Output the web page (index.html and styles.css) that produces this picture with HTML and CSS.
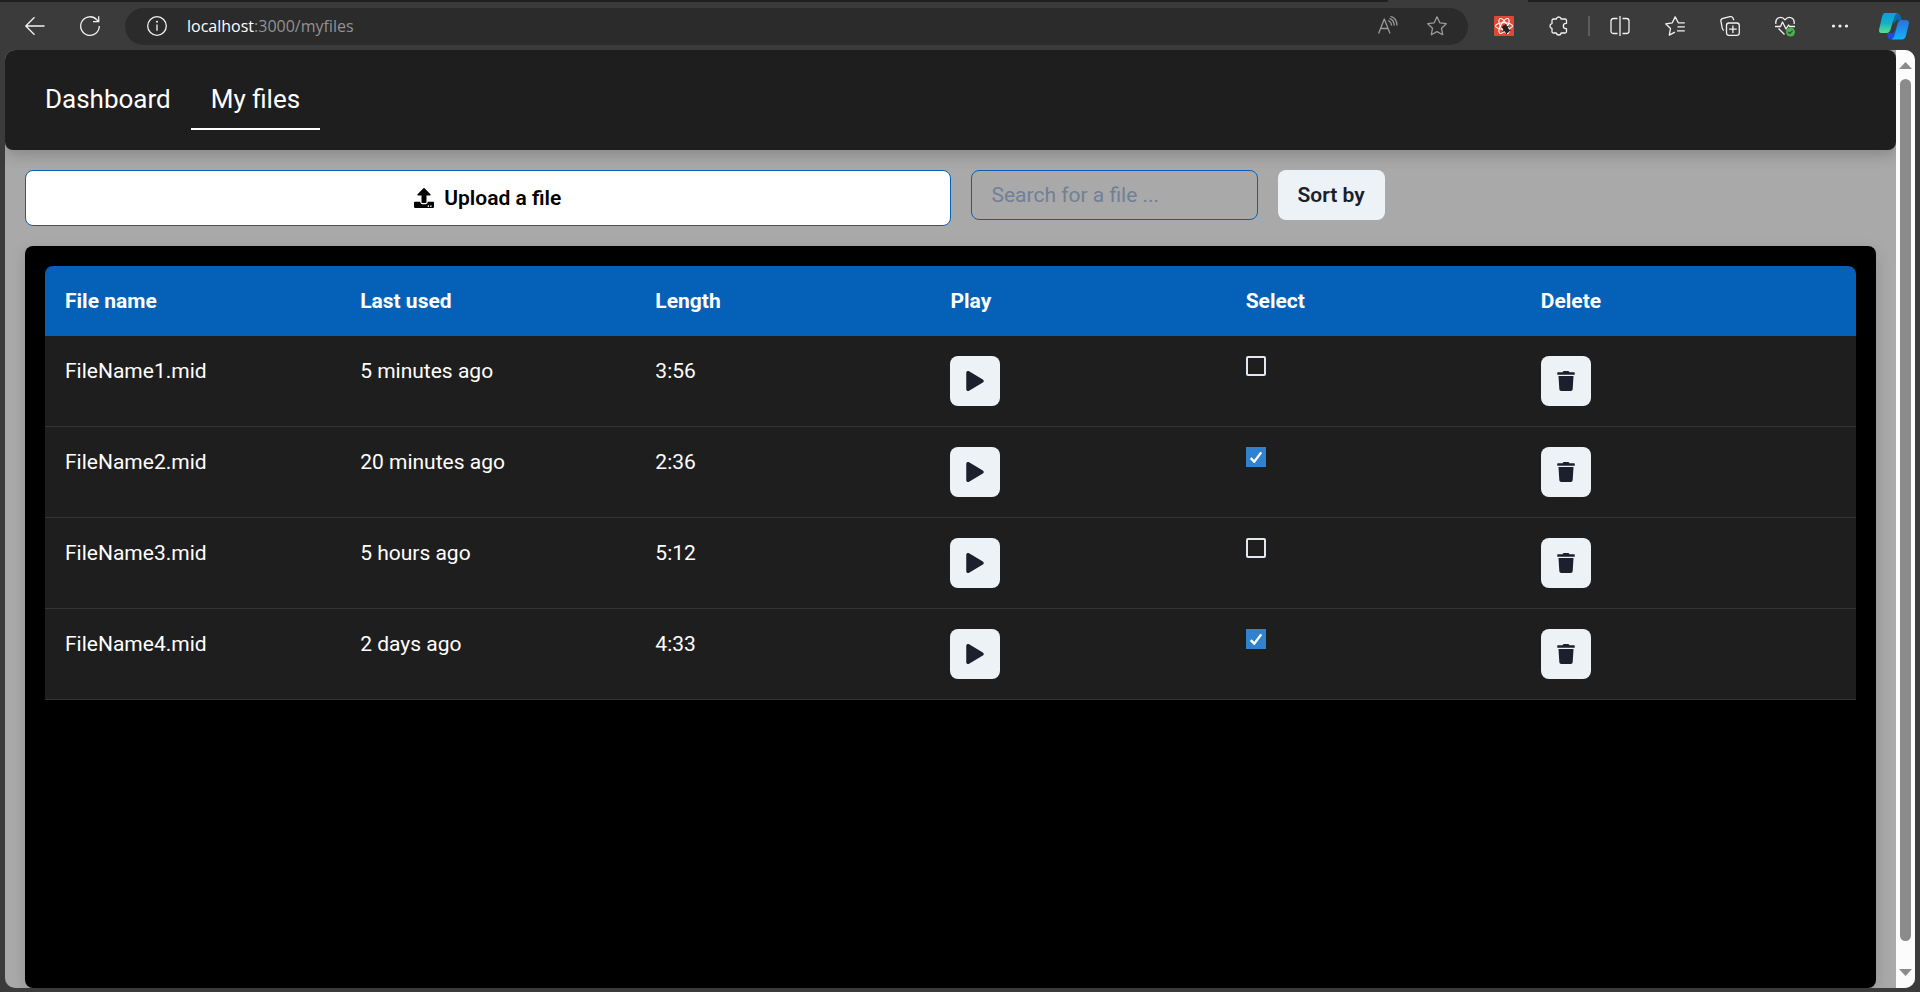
FILE: index.html
```html
<!DOCTYPE html>
<html lang="en">
<head>
<meta charset="utf-8">
<title>My files</title>
<link rel="stylesheet" href="styles.css">
</head>
<body>
<svg class="defs" aria-hidden="true">
  <symbol id="play" viewBox="0 0 448 512"><path d="M424.4 214.7L72.4 6.6C43.8-10.3 0 6.1 0 47.9V464c0 37.5 40.7 60.1 72.4 41.3l352-208c31.4-18.5 31.5-64.1 0-82.6z"/></symbol>
  <symbol id="trash" viewBox="0 0 448 512"><path d="M432 32H312l-9.400-18.700A24 24 0 0 0 281.100 0H166.800a23.720 23.720 0 0 0-21.400 13.300L136 32H16A16 16 0 0 0 0 48v32a16 16 0 0 0 16 16h416a16 16 0 0 0 16-16V48a16 16 0 0 0-16-16zM53.200 467a48 48 0 0 0 47.900 45h245.800a48 48 0 0 0 47.900-45L416 128H32z"/></symbol>
  <symbol id="check" viewBox="0 0 12 10"><polyline points="1.500 6 4.500 9 10.500 1" fill="none" stroke="currentColor" stroke-width="2"/></symbol>
</svg>

<header class="browser">
  <div class="tabstrip"><span class="tab-left"></span><span class="tab-active"></span><span class="tab-right"></span></div>
  <div class="toolbar">
    <button class="tool" aria-label="Back"><svg class="glyph" viewBox="0 0 20 20"><path d="M19.500 10H1M9.500 1.300L.8 10l8.700 8.700"/></svg></button>
    <button class="tool" aria-label="Reload"><svg class="glyph" viewBox="0 0 20 20"><path d="M19.300 10A9.300 9.300 0 1 1 16.800 3.700L18.600 5.500M18.700.3V5.700H13"/></svg></button>
    <div class="omnibox">
      <button class="site" aria-label="Site information"><svg class="glyph" viewBox="0 0 20 20"><circle cx="10" cy="10" r="9.300"/><path d="M10 8.500v6.300"/><circle class="solid" cx="10" cy="5.800" r="1"/></svg></button>
      <p class="url"><span class="host">localhost</span>:3000/myfiles</p>
      <button class="dim" aria-label="Read aloud"><svg class="glyph" viewBox="0 0 20 20"><path d="M.6 17.500L6.300 3l5.700 14.500M2.500 12.500h7.700M10 4.500c2 .8 3.500 2.600 3.500 5M11.500 2.300c2.800 1 4.700 3.600 4.700 7.200M12.500.3c4 1 6.500 4.500 6.500 9.200"/></svg></button>
      <button class="dim" aria-label="Add to favorites"><svg class="glyph" viewBox="0 0 20 20"><path d="M10 .8l2.800 6 6.500.9-4.800 4.500 1.200 6.500L10 15.600l-5.700 3.100 1.200-6.500L.7 7.700l6.500-.9z"/></svg></button>
    </div>
    <div class="tools">
      <button class="tool" aria-label="React extension"><svg class="badge" viewBox="0 0 20 20"><rect width="20" height="20" rx="1" fill="#de4937"/><g fill="none" stroke="#fff" stroke-width="1.100"><ellipse cx="10" cy="10" rx="8.500" ry="3.300"/><ellipse cx="10" cy="10" rx="8.500" ry="3.300" transform="rotate(60 10 10)"/><ellipse cx="10" cy="10" rx="8.500" ry="3.300" transform="rotate(120 10 10)"/></g><ellipse cx="11.800" cy="13" rx="2.600" ry="4.200" transform="rotate(-35 11.800 13)" fill="#222"/><path d="M7.500 11l3 1M8.500 15.500l3-2M12 8l-.5 3M12.500 18l-.5-3M16.500 15l-4-2M14.500 10l-2 2" stroke="#222" stroke-width="1.200"/></svg></button>
      <button class="tool" aria-label="Extensions"><svg class="glyph" viewBox="0 0 20 20"><path d="M7.300 3A2.500 2.500 0 0 1 12.200 3H16Q17.500 3 17.500 4.500V7.300H17A2.600 2.600 0 0 0 17 12.600H17.500V15.500Q17.500 17 16 17H12.200A2.500 2.500 0 0 1 7.300 17H4.500Q3 17 3 15.500V12.500A2.500 2.500 0 0 1 3 7.600V4.500Q3 3 4.500 3z"/></svg></button>
      <span class="separator"></span>
      <button class="tool" aria-label="Split screen"><svg class="glyph" viewBox="0 0 20 20"><path d="M7.500 17.500H3.500Q1 17.500 1 15v-10Q1 2.500 3.500 2.500H7.500M12.500 2.500h4Q19 2.500 19 5v10Q19 17.500 16.500 17.500H12.500M10 0v20"/></svg></button>
      <button class="tool" aria-label="Favorites"><svg class="glyph" viewBox="0 0 20 20"><path d="M19.800 6.800h-6.500L10.200.9 7.300 6.800l-6.600 1 4.800 4.700-1.200 6.600 5.600-3M12.500 10.800h7.300M12 14.800h7.800"/></svg></button>
      <button class="tool" aria-label="Collections"><svg class="glyph" viewBox="0 0 20 20"><rect x="6.500" y="7" width="12.800" height="12.300" rx="2.500"/><path d="M12.900 9.500v7.500M9.200 13.200h7.500M13.800 4.200L13 2Q12.200.2 10 .7L3 2.300Q.5 3 .9 5.200L2.300 12.500Q2.600 14 4 14.400"/></svg></button>
      <button class="tool" aria-label="Browser essentials"><svg class="glyph" viewBox="0 0 20 20"><path d="M.9 8C-.2 1.500 6.500-.8 10 3.800 13.500-.8 20.200 1.500 19.100 8M0 10.500h5.500l2-4.500 3.500 7 2.500-4 1 1.500h5.500M3.500 12.500L9.500 18.500"/><circle cx="15.500" cy="16" r="4.500" fill="#4caf50" stroke="none"/><path class="tick" d="M13.300 16l1.500 1.500 2.800-2.800"/></svg></button>
      <button class="tool" aria-label="Settings and more"><svg class="glyph" viewBox="0 0 20 20"><g class="solid"><circle cx="3.500" cy="10" r="1.600"/><circle cx="10" cy="10" r="1.600"/><circle cx="16.500" cy="10" r="1.600"/></g></svg></button>
      <button class="tool" aria-label="Copilot"><svg class="copilot" viewBox="0 0 30 27">
        <defs>
          <linearGradient id="cg1" x1="0" y1="0" x2="0" y2="1"><stop offset="0" stop-color="#0a9fe0"/><stop offset=".5" stop-color="#11b0c8"/><stop offset="1" stop-color="#5be08a"/></linearGradient>
          <linearGradient id="cg2" x1="0" y1="0" x2="0" y2="1"><stop offset="0" stop-color="#2a71dc"/><stop offset="1" stop-color="#12b4fa"/></linearGradient>
        </defs>
        <path d="M13 0H17.500Q20.500 0 21.500 3L22.800 7H19Q16.500 7 15 11z" fill="#0b6aa8"/>
        <path d="M8 20H13Q15.500 20 17 15V24Q16.500 26.500 14 26.500H12.500Q9.500 26.500 8.800 24z" fill="#1b4be0"/>
        <path d="M6 0H18Q16.500.8 15.500 3.500L11.500 16.500Q10.300 20 7.500 20H3Q-.7 20 .2 16L3 4Q4 0 6 0z" fill="url(#cg1)"/>
        <path d="M22 7H27Q30.600 7 29.800 11L27 22.500Q26 26.500 23 26.500H12.500Q14.500 25.500 15.500 22.500L18.500 11Q19.500 7 22 7z" fill="url(#cg2)"/>
      </svg></button>
    </div>
  </div>
</header>

<div class="page">
  <div class="content">
    <nav class="nav">
      <a class="nav-link" href="#dashboard">Dashboard</a>
      <a class="nav-link current" href="#myfiles" aria-current="page">My files</a>
    </nav>
    <main class="main">
      <div class="actions">
        <button class="upload"><svg class="upload-icon" viewBox="0 0 512 512"><path d="M296 384h-80c-13.300 0-24-10.700-24-24V192h-87.700c-17.800 0-26.700-21.500-14.100-34.100L242.300 5.700c7.500-7.500 19.800-7.500 27.300 0l152.200 152.200c12.600 12.600 3.700 34.100-14.100 34.100H320v168c0 13.300-10.700 24-24 24zm216-8v112c0 13.300-10.700 24-24 24H24c-13.300 0-24-10.700-24-24V376c0-13.300 10.700-24 24-24h136v8c0 30.900 25.100 56 56 56h80c30.900 0 56-25.100 56-56v-8h136c13.300 0 24 10.700 24 24zm-124 88c0-11-9-20-20-20s-20 9-20 20 9 20 20 20 20-9 20-20zm64 0c0-11-9-20-20-20s-20 9-20 20 9 20 20 20 20-9 20-20z"/></svg>Upload a file</button>
        <input class="search" type="search" placeholder="Search for a file ..." aria-label="Search for a file">
        <button class="sort">Sort by</button>
      </div>
      <section class="panel">
        <table class="files">
          <thead><tr><th>File name</th><th>Last used</th><th>Length</th><th>Play</th><th>Select</th><th>Delete</th></tr></thead>
          <tbody>
            <tr><td>FileName1.mid</td><td>5 minutes ago</td><td>3:56</td>
              <td><button class="icon-button" aria-label="Play FileName1.mid"><svg><use href="#play"/></svg></button></td>
              <td><label class="box"><input type="checkbox" aria-label="Select FileName1.mid"><svg><use href="#check"/></svg></label></td>
              <td><button class="icon-button" aria-label="Delete FileName1.mid"><svg><use href="#trash"/></svg></button></td></tr>
            <tr><td>FileName2.mid</td><td>20 minutes ago</td><td>2:36</td>
              <td><button class="icon-button" aria-label="Play FileName2.mid"><svg><use href="#play"/></svg></button></td>
              <td><label class="box"><input type="checkbox" aria-label="Select FileName2.mid" checked><svg><use href="#check"/></svg></label></td>
              <td><button class="icon-button" aria-label="Delete FileName2.mid"><svg><use href="#trash"/></svg></button></td></tr>
            <tr><td>FileName3.mid</td><td>5 hours ago</td><td>5:12</td>
              <td><button class="icon-button" aria-label="Play FileName3.mid"><svg><use href="#play"/></svg></button></td>
              <td><label class="box"><input type="checkbox" aria-label="Select FileName3.mid"><svg><use href="#check"/></svg></label></td>
              <td><button class="icon-button" aria-label="Delete FileName3.mid"><svg><use href="#trash"/></svg></button></td></tr>
            <tr><td>FileName4.mid</td><td>2 days ago</td><td>4:33</td>
              <td><button class="icon-button" aria-label="Play FileName4.mid"><svg><use href="#play"/></svg></button></td>
              <td><label class="box"><input type="checkbox" aria-label="Select FileName4.mid" checked><svg><use href="#check"/></svg></label></td>
              <td><button class="icon-button" aria-label="Delete FileName4.mid"><svg><use href="#trash"/></svg></button></td></tr>
          </tbody>
        </table>
      </section>
    </main>
  </div>
  <div class="scrollbar" aria-hidden="true">
    <svg class="arrow" viewBox="0 0 13 7"><path d="M6.500 0L13 7H0z"/></svg>
    <span class="thumb"></span>
    <svg class="arrow" viewBox="0 0 13 7"><path d="M0 0h13L6.500 7z"/></svg>
  </div>
</div>
</body>
</html>
```
FILE: styles.css
```css
* { box-sizing: border-box; }

body {
  margin: 0;
  height: 100vh;
  display: flex;
  flex-direction: column;
  background: #3b3b3b;
  color: #fff;
  font: 21px/30px Roboto, "Noto Sans", sans-serif;
}

button {
  margin: 0;
  padding: 0;
  border: 0;
  background: none;
  color: inherit;
  font: inherit;
  cursor: pointer;
}

.defs { display: none; }

/* Browser chrome */
.tabstrip { display: flex; height: 2px; }
.tab-left { flex: 1388; background: #202020; }
.tab-active { flex: 140; }
.tab-right { flex: 392; background: #202020; }

.toolbar {
  display: flex;
  align-items: center;
  height: 48px;
  padding-left: 7px;
}
.tool {
  flex: none;
  width: 55px;
  height: 40px;
  display: grid;
  place-items: center;
}
.glyph {
  width: 20px;
  height: 20px;
  overflow: visible;
  fill: none;
  stroke: #f2f2f2;
  stroke-width: 1.300;
  stroke-linejoin: round;
}
.glyph .solid { fill: #f2f2f2; stroke: none; }
.glyph .tick { stroke: #25552a; stroke-width: 1.200; }
.badge { width: 20px; height: 20px; }
.copilot { width: 30px; height: 27px; }

.omnibox {
  flex: 1;
  display: flex;
  align-items: center;
  height: 37px;
  margin-left: 8px;
  padding: 0 21px 0 22px;
  border-radius: 19px;
  background: #2b2b2b;
}
.site, .dim { display: grid; place-items: center; }
.url {
  flex: 1;
  margin: 0 0 0 20px;
  color: #929292;
  font: 16px/24px "Open Sans", "Noto Sans", sans-serif;
}
.host { color: #fff; }
.dim + .dim { margin-left: 29px; }
.dim .glyph { stroke: #9a9a9a; }

.tools { display: flex; align-items: center; margin-left: 8px; }
.tools .tool:last-child { width: 53px; }
.separator { width: 2px; height: 20px; margin: 0 2px; background: #5c5c5c; }

/* Page frame */
.page {
  flex: 1;
  min-height: 0;
  display: flex;
  margin: 0 5px 4px;
  border-radius: 10px;
  overflow: hidden;
  background: #a9a9a9;
}
.content { flex: 1; display: flex; flex-direction: column; }

.scrollbar {
  width: 19px;
  display: flex;
  flex-direction: column;
  align-items: center;
  gap: 10px;
  padding: 12px 0;
  background: #fcfcfc;
}
.arrow { width: 13px; height: 7px; fill: #8b8b8b; }
.thumb { flex: 1; width: 11px; margin-bottom: 18px; border-radius: 6px; background: #8b8b8b; }

/* Navigation */
.nav {
  display: flex;
  align-items: center;
  height: 100px;
  padding: 0 20px;
  border-radius: 8px;
  background: #1e1e1e;
  box-shadow: 0 5px 15px rgba(0, 0, 0, 0.2);
}
.nav-link {
  padding: 12px 20px;
  border-bottom: 2px solid transparent;
  color: #fff;
  font-size: 26px;
  line-height: 34px;
  text-decoration: none;
}
.current { border-color: #fff; }

/* Actions */
.main {
  flex: 1;
  display: flex;
  flex-direction: column;
  gap: 20px;
  padding: 20px 20px 0;
}
.actions { display: flex; align-items: flex-start; gap: 20px; }
.upload {
  flex: 0 0 50%;
  height: 56px;
  display: flex;
  align-items: center;
  justify-content: center;
  gap: 10px;
  border: 1px solid #0561b8;
  border-radius: 8px;
  background: #fff;
  color: #000;
  font-weight: 600;
}
.upload-icon { width: 20px; height: 20px; }
.search {
  width: 287px;
  height: 50px;
  padding: 0 20px;
  border: 1px solid #0561b8;
  border-radius: 8px;
  background: transparent;
  color: #1a202c;
  font: inherit;
  appearance: none;
}
.search::placeholder { color: #718096; opacity: 1; }
.sort {
  height: 50px;
  padding: 0 20px;
  border-radius: 8px;
  background: #edf2f7;
  color: #1a202c;
  font-weight: 600;
}

/* File table */
.panel {
  flex: 1;
  padding: 20px;
  border-radius: 8px;
  background: #000;
  box-shadow: 0 5px 15px rgba(0, 0, 0, 0.15);
}
.files, .files thead, .files tbody { display: block; }
.files tr {
  display: grid;
  grid-template-columns: repeat(6, 1fr);
  padding: 20px;
}
.files thead tr { border-radius: 8px 8px 0 0; background: #0561b8; }
.files tbody tr { border-bottom: 1px solid #343434; background: #1e1e1e; }
.files th, .files td { padding: 0; text-align: left; }
.files th { font-weight: 700; }

.icon-button {
  width: 50px;
  height: 50px;
  display: grid;
  place-items: center;
  border-radius: 8px;
  background: #edf2f7;
  color: #1a202c;
}
.icon-button svg { width: 18px; height: 20px; fill: currentColor; }

.box { display: inline-grid; place-items: center; vertical-align: top; }
.box input, .box svg { grid-area: 1 / 1; }
.box input {
  width: 20px;
  height: 20px;
  margin: 0;
  border: 2px solid #e2e8f0;
  border-radius: 2px;
  appearance: none;
}
.box input:checked { border-color: #3182ce; border-radius: 0; background: #3182ce; }
.box svg { width: 14px; height: 12px; visibility: hidden; pointer-events: none; }
.box input:checked + svg { visibility: visible; }
```
